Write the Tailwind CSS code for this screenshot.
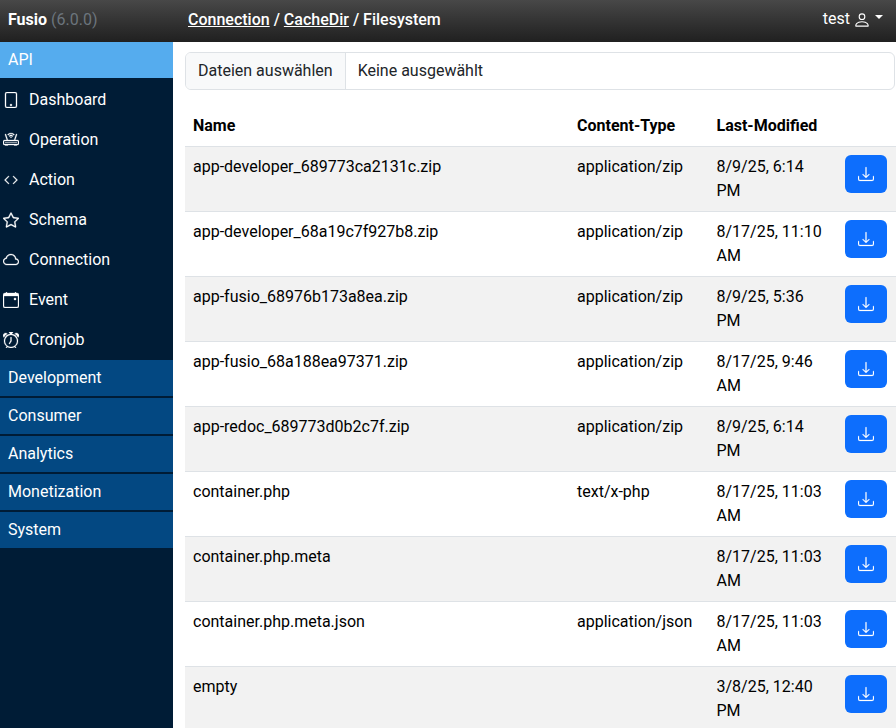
<!DOCTYPE html>
<html lang="en">
<head>
    <meta charset="UTF-8">
    <meta name="viewport" content="width=device-width, initial-scale=1.0">
    <title>Fusio - Filesystem</title>
    <script src="https://cdn.jsdelivr.net/npm/@tailwindcss/browser@4"></script>
</head>
<body class="h-[728px] overflow-hidden bg-white font-['Roboto',sans-serif] text-base text-black">
    <header class="flex h-[42px] items-center bg-gradient-to-b from-[#484848] to-[#202020] pb-[2px] text-white">
        <div class="w-[188px] pl-2 font-bold">Fusio <span class="font-normal text-[#6c757d]">(6.0.0)</span></div>
        <div class="flex-1 font-medium"><a href="#" class="underline">Connection</a> / <a href="#" class="underline">CacheDir</a> / Filesystem</div>
        <div class="flex items-center pb-[2px] pr-[13px]">
            test
            <svg class="ml-[3px] mt-[2px]" width="18" height="18" viewBox="0 0 16 16" fill="currentColor"><path d="M8 8a3 3 0 1 0 0-6 3 3 0 0 0 0 6m2-3a2 2 0 1 1-4 0 2 2 0 0 1 4 0m4 8c0 1-1 1-1 1H3s-1 0-1-1 1-4 6-4 6 3 6 4m-1-.004c-.001-.246-.154-.986-.832-1.664C11.516 10.68 10.289 10 8 10s-3.516.68-4.168 1.332c-.678.678-.83 1.418-.832 1.664z"/></svg>
            <span class="mb-[4px] ml-[4px] h-0 w-0 border-x-[4.5px] border-t-[4.5px] border-x-transparent border-t-white"></span>
        </div>
    </header>
    <div class="flex h-[686px]">
        <nav class="w-[173px] shrink-0 bg-[#001c36] text-white">
            <div class="flex h-9 items-center bg-[#55acee] pl-2">API</div>
            <ul class="pt-[2px]">
                <li class="flex h-10 items-center gap-[10px] pl-[3px]"><svg width="16" height="16" viewBox="0 0 16 16" fill="currentColor" stroke="currentColor" stroke-width="0.3"><path d="M12 1a1 1 0 0 1 1 1v12a1 1 0 0 1-1 1H4a1 1 0 0 1-1-1V2a1 1 0 0 1 1-1zM4 0a2 2 0 0 0-2 2v12a2 2 0 0 0 2 2h8a2 2 0 0 0 2-2V2a2 2 0 0 0-2-2z"/><path d="M8 14a1 1 0 1 0 0-2 1 1 0 0 0 0 2"/></svg>Dashboard</li>
                <li class="flex h-10 items-center gap-[10px] pl-[3px]"><svg width="16" height="16" viewBox="0 0 16 16" fill="currentColor" stroke="currentColor" stroke-width="0.3"><path d="M5.525 3.025a3.5 3.5 0 0 1 4.95 0 .5.5 0 1 0 .707-.707 4.5 4.5 0 0 0-6.364 0 .5.5 0 0 0 .707.707"/><path d="M6.94 4.44a1.5 1.5 0 0 1 2.12 0 .5.5 0 0 0 .708-.708 2.5 2.5 0 0 0-3.536 0 .5.5 0 0 0 .707.707Z"/><path d="M2.974 2.342a.5.5 0 1 0-.948.316L3.806 8H1.5A1.5 1.5 0 0 0 0 9.5v2A1.5 1.5 0 0 0 1.5 13H2a.5.5 0 0 0 .5.5h2A.5.5 0 0 0 5 13h6a.5.5 0 0 0 .5.5h2a.5.5 0 0 0 .5-.5h.5a1.5 1.5 0 0 0 1.5-1.5v-2A1.5 1.5 0 0 0 14.5 8h-2.306l1.78-5.342a.5.5 0 1 0-.948-.316L11.14 8H4.86zM14.5 9a.5.5 0 0 1 .5.5v2a.5.5 0 0 1-.5.5h-13a.5.5 0 0 1-.5-.5v-2a.5.5 0 0 1 .5-.5z"/><path d="M8.5 5.5a.5.5 0 1 1-1 0 .5.5 0 0 1 1 0M2.5 10.5a.5.5 0 1 1 1 0 .5.5 0 0 1-1 0m2 0a.5.5 0 1 1 1 0 .5.5 0 0 1-1 0m2 0a.5.5 0 1 1 1 0 .5.5 0 0 1-1 0m2 0a.5.5 0 1 1 1 0 .5.5 0 0 1-1 0m2 0a.5.5 0 1 1 1 0 .5.5 0 0 1-1 0m2 0a.5.5 0 1 1 1 0 .5.5 0 0 1-1 0"/></svg>Operation</li>
                <li class="flex h-10 items-center gap-[10px] pl-[3px]"><svg width="16" height="16" viewBox="0 0 16 16" fill="currentColor" stroke="currentColor" stroke-width="0.3"><path d="M5.854 4.854a.5.5 0 1 0-.708-.708l-3.5 3.5a.5.5 0 0 0 0 .708l3.5 3.5a.5.5 0 0 0 .708-.708L2.707 8zm4.292 0a.5.5 0 0 1 .708-.708l3.5 3.5a.5.5 0 0 1 0 .708l-3.5 3.5a.5.5 0 0 1-.708-.708L13.293 8z"/></svg>Action</li>
                <li class="flex h-10 items-center gap-[10px] pl-[3px]"><svg width="16" height="16" viewBox="0 0 16 16" fill="currentColor" stroke="currentColor" stroke-width="0.3"><path d="M2.866 14.85c-.078.444.36.791.746.593l4.39-2.256 4.389 2.256c.386.198.824-.149.746-.592l-.83-4.73 3.522-3.356c.33-.314.16-.888-.282-.95l-4.898-.696L8.465.792a.513.513 0 0 0-.927 0L5.354 5.12l-4.898.696c-.441.062-.612.636-.283.95l3.523 3.356-.83 4.73zm4.905-2.767-3.686 1.894.694-3.957a.56.56 0 0 0-.163-.505L1.71 6.745l4.052-.576a.53.53 0 0 0 .393-.288L8 2.223l1.847 3.658a.53.53 0 0 0 .393.288l4.052.575-2.906 2.77a.56.56 0 0 0-.163.506l.694 3.957-3.686-1.894a.5.5 0 0 0-.461 0z"/></svg>Schema</li>
                <li class="flex h-10 items-center gap-[10px] pl-[3px]"><svg width="16" height="16" viewBox="0 0 16 16" fill="currentColor" stroke="currentColor" stroke-width="0.3"><path d="M4.406 3.342A5.53 5.53 0 0 1 8 2c2.69 0 4.923 2 5.166 4.579C14.758 6.804 16 8.137 16 9.773 16 11.569 14.502 13 12.687 13H3.781C1.708 13 0 11.366 0 9.318c0-1.763 1.266-3.223 2.942-3.593.143-.863.698-1.723 1.464-2.383m.653.757c-.757.653-1.153 1.44-1.153 2.056v.448l-.445.049C2.064 6.805 1 7.952 1 9.318 1 10.785 2.23 12 3.781 12h8.906C13.98 12 15 10.988 15 9.773c0-1.216-1.02-2.228-2.313-2.228h-.5v-.5C12.188 4.825 10.328 3 8 3a4.53 4.53 0 0 0-2.941 1.1z"/></svg>Connection</li>
                <li class="flex h-10 items-center gap-[10px] pl-[3px]"><svg width="16" height="16" viewBox="0 0 16 16" fill="currentColor" stroke="currentColor" stroke-width="0.3"><path d="M11 6.5a.5.5 0 0 1 .5-.5h1a.5.5 0 0 1 .5.5v1a.5.5 0 0 1-.5.5h-1a.5.5 0 0 1-.5-.5z"/><path d="M3.5 0a.5.5 0 0 1 .5.5V1h8V.5a.5.5 0 0 1 1 0V1h1a2 2 0 0 1 2 2v11a2 2 0 0 1-2 2H2a2 2 0 0 1-2-2V3a2 2 0 0 1 2-2h1V.5a.5.5 0 0 1 .5-.5M1 4v10a1 1 0 0 0 1 1h12a1 1 0 0 0 1-1V4z"/></svg>Event</li>
                <li class="flex h-10 items-center gap-[10px] pl-[3px]"><svg width="16" height="16" viewBox="0 0 16 16" fill="currentColor" stroke="currentColor" stroke-width="0.3"><path d="M8.5 5.5a.5.5 0 0 0-1 0v3.362l-1.429 2.38a.5.5 0 1 0 .858.515l1.5-2.5A.5.5 0 0 0 8.5 9z"/><path d="M6.5 0a.5.5 0 0 0 0 1H7v1.07a7.001 7.001 0 0 0-3.273 12.474l-.602.602a.5.5 0 0 0 .707.708l.746-.746A6.97 6.97 0 0 0 8 16a6.97 6.97 0 0 0 3.422-.892l.746.746a.5.5 0 0 0 .707-.708l-.601-.602A7.001 7.001 0 0 0 9 2.07V1h.5a.5.5 0 0 0 0-1zm1.038 3.018a6 6 0 0 1 .924 0 6 6 0 1 1-.924 0M0 3.5c0 .753.333 1.429.86 1.887A8.04 8.04 0 0 1 4.387 1.86 2.5 2.5 0 0 0 0 3.5M13.5 1c-.753 0-1.429.333-1.887.86a8.04 8.04 0 0 1 3.527 3.527A2.5 2.5 0 0 0 13.5 1"/></svg>Cronjob</li>
            </ul>
            <div class="flex h-[36px] items-center bg-[#034882] pl-2">Development</div>
            <div class="mt-[2px] flex h-[36px] items-center bg-[#034882] pl-2">Consumer</div>
            <div class="mt-[2px] flex h-[36px] items-center bg-[#034882] pl-2">Analytics</div>
            <div class="mt-[2px] flex h-[36px] items-center bg-[#034882] pl-2">Monetization</div>
            <div class="mt-[2px] flex h-[36px] items-center bg-[#034882] pl-2">System</div>
        </nav>
        <main class="min-w-0 flex-1 overflow-hidden pl-3 pt-[10px]">
            <div class="flex h-[38px] w-[710px] overflow-hidden rounded-md border border-[#dee2e6] text-[#212529]">
                <div class="flex items-center border-r border-[#dee2e6] bg-[#f8f9fa] px-3">Dateien auswählen</div>
                <div class="flex items-center px-3">Keine ausgewählt</div>
            </div>
            <table class="mt-4 w-[711px] table-fixed border-collapse text-left">
                <colgroup>
                    <col class="w-[384px]"><col class="w-[139.5px]"><col class="w-[128.5px]"><col class="w-[59px]">
                </colgroup>
                <thead>
                    <tr class="h-10 border-b border-[#dee2e6]">
                        <th class="px-2 pt-px align-middle font-bold">Name</th>
                        <th class="px-2 pt-px align-middle font-bold">Content-Type</th>
                        <th class="px-2 pt-px align-middle font-bold">Last-Modified</th>
                        <th></th>
                    </tr>
                </thead>
                <tbody>
                    <tr class="border-b border-[#dee2e6] bg-[#f2f2f2]">
                        <td class="p-2 align-top">app-developer_689773ca2131c.zip</td>
                        <td class="p-2 align-top">application/zip</td>
                        <td class="p-2 align-top">8/9/25, 6:14 PM</td>
                        <td class="p-2 align-top"><button class="flex h-[38px] w-[42px] items-center justify-center rounded-md bg-[#0d6efd] text-white"><svg width="16" height="16" viewBox="0 0 16 16" fill="currentColor" stroke="currentColor" stroke-width="0.25"><path d="M.5 9.9a.5.5 0 0 1 .5.5v2.5a1 1 0 0 0 1 1h12a1 1 0 0 0 1-1v-2.5a.5.5 0 0 1 1 0v2.5a2 2 0 0 1-2 2H2a2 2 0 0 1-2-2v-2.5a.5.5 0 0 1 .5-.5"/><path d="M7.646 11.854a.5.5 0 0 0 .708 0l3-3a.5.5 0 0 0-.708-.708L8.5 10.293V1.5a.5.5 0 0 0-1 0v8.793L5.354 8.146a.5.5 0 1 0-.708.708z"/></svg></button></td>
                    </tr>
                    <tr class="border-b border-[#dee2e6]">
                        <td class="p-2 align-top">app-developer_68a19c7f927b8.zip</td>
                        <td class="p-2 align-top">application/zip</td>
                        <td class="p-2 align-top">8/17/25, 11:10 AM</td>
                        <td class="p-2 align-top"><button class="flex h-[38px] w-[42px] items-center justify-center rounded-md bg-[#0d6efd] text-white"><svg width="16" height="16" viewBox="0 0 16 16" fill="currentColor" stroke="currentColor" stroke-width="0.25"><path d="M.5 9.9a.5.5 0 0 1 .5.5v2.5a1 1 0 0 0 1 1h12a1 1 0 0 0 1-1v-2.5a.5.5 0 0 1 1 0v2.5a2 2 0 0 1-2 2H2a2 2 0 0 1-2-2v-2.5a.5.5 0 0 1 .5-.5"/><path d="M7.646 11.854a.5.5 0 0 0 .708 0l3-3a.5.5 0 0 0-.708-.708L8.5 10.293V1.5a.5.5 0 0 0-1 0v8.793L5.354 8.146a.5.5 0 1 0-.708.708z"/></svg></button></td>
                    </tr>
                    <tr class="border-b border-[#dee2e6] bg-[#f2f2f2]">
                        <td class="p-2 align-top">app-fusio_68976b173a8ea.zip</td>
                        <td class="p-2 align-top">application/zip</td>
                        <td class="p-2 align-top">8/9/25, 5:36 PM</td>
                        <td class="p-2 align-top"><button class="flex h-[38px] w-[42px] items-center justify-center rounded-md bg-[#0d6efd] text-white"><svg width="16" height="16" viewBox="0 0 16 16" fill="currentColor" stroke="currentColor" stroke-width="0.25"><path d="M.5 9.9a.5.5 0 0 1 .5.5v2.5a1 1 0 0 0 1 1h12a1 1 0 0 0 1-1v-2.5a.5.5 0 0 1 1 0v2.5a2 2 0 0 1-2 2H2a2 2 0 0 1-2-2v-2.5a.5.5 0 0 1 .5-.5"/><path d="M7.646 11.854a.5.5 0 0 0 .708 0l3-3a.5.5 0 0 0-.708-.708L8.5 10.293V1.5a.5.5 0 0 0-1 0v8.793L5.354 8.146a.5.5 0 1 0-.708.708z"/></svg></button></td>
                    </tr>
                    <tr class="border-b border-[#dee2e6]">
                        <td class="p-2 align-top">app-fusio_68a188ea97371.zip</td>
                        <td class="p-2 align-top">application/zip</td>
                        <td class="p-2 align-top">8/17/25, 9:46 AM</td>
                        <td class="p-2 align-top"><button class="flex h-[38px] w-[42px] items-center justify-center rounded-md bg-[#0d6efd] text-white"><svg width="16" height="16" viewBox="0 0 16 16" fill="currentColor" stroke="currentColor" stroke-width="0.25"><path d="M.5 9.9a.5.5 0 0 1 .5.5v2.5a1 1 0 0 0 1 1h12a1 1 0 0 0 1-1v-2.5a.5.5 0 0 1 1 0v2.5a2 2 0 0 1-2 2H2a2 2 0 0 1-2-2v-2.5a.5.5 0 0 1 .5-.5"/><path d="M7.646 11.854a.5.5 0 0 0 .708 0l3-3a.5.5 0 0 0-.708-.708L8.5 10.293V1.5a.5.5 0 0 0-1 0v8.793L5.354 8.146a.5.5 0 1 0-.708.708z"/></svg></button></td>
                    </tr>
                    <tr class="border-b border-[#dee2e6] bg-[#f2f2f2]">
                        <td class="p-2 align-top">app-redoc_689773d0b2c7f.zip</td>
                        <td class="p-2 align-top">application/zip</td>
                        <td class="p-2 align-top">8/9/25, 6:14 PM</td>
                        <td class="p-2 align-top"><button class="flex h-[38px] w-[42px] items-center justify-center rounded-md bg-[#0d6efd] text-white"><svg width="16" height="16" viewBox="0 0 16 16" fill="currentColor" stroke="currentColor" stroke-width="0.25"><path d="M.5 9.9a.5.5 0 0 1 .5.5v2.5a1 1 0 0 0 1 1h12a1 1 0 0 0 1-1v-2.5a.5.5 0 0 1 1 0v2.5a2 2 0 0 1-2 2H2a2 2 0 0 1-2-2v-2.5a.5.5 0 0 1 .5-.5"/><path d="M7.646 11.854a.5.5 0 0 0 .708 0l3-3a.5.5 0 0 0-.708-.708L8.5 10.293V1.5a.5.5 0 0 0-1 0v8.793L5.354 8.146a.5.5 0 1 0-.708.708z"/></svg></button></td>
                    </tr>
                    <tr class="border-b border-[#dee2e6]">
                        <td class="p-2 align-top">container.php</td>
                        <td class="p-2 align-top">text/x-php</td>
                        <td class="p-2 align-top">8/17/25, 11:03 AM</td>
                        <td class="p-2 align-top"><button class="flex h-[38px] w-[42px] items-center justify-center rounded-md bg-[#0d6efd] text-white"><svg width="16" height="16" viewBox="0 0 16 16" fill="currentColor" stroke="currentColor" stroke-width="0.25"><path d="M.5 9.9a.5.5 0 0 1 .5.5v2.5a1 1 0 0 0 1 1h12a1 1 0 0 0 1-1v-2.5a.5.5 0 0 1 1 0v2.5a2 2 0 0 1-2 2H2a2 2 0 0 1-2-2v-2.5a.5.5 0 0 1 .5-.5"/><path d="M7.646 11.854a.5.5 0 0 0 .708 0l3-3a.5.5 0 0 0-.708-.708L8.5 10.293V1.5a.5.5 0 0 0-1 0v8.793L5.354 8.146a.5.5 0 1 0-.708.708z"/></svg></button></td>
                    </tr>
                    <tr class="border-b border-[#dee2e6] bg-[#f2f2f2]">
                        <td class="p-2 align-top">container.php.meta</td>
                        <td class="p-2 align-top"></td>
                        <td class="p-2 align-top">8/17/25, 11:03 AM</td>
                        <td class="p-2 align-top"><button class="flex h-[38px] w-[42px] items-center justify-center rounded-md bg-[#0d6efd] text-white"><svg width="16" height="16" viewBox="0 0 16 16" fill="currentColor" stroke="currentColor" stroke-width="0.25"><path d="M.5 9.9a.5.5 0 0 1 .5.5v2.5a1 1 0 0 0 1 1h12a1 1 0 0 0 1-1v-2.5a.5.5 0 0 1 1 0v2.5a2 2 0 0 1-2 2H2a2 2 0 0 1-2-2v-2.5a.5.5 0 0 1 .5-.5"/><path d="M7.646 11.854a.5.5 0 0 0 .708 0l3-3a.5.5 0 0 0-.708-.708L8.5 10.293V1.5a.5.5 0 0 0-1 0v8.793L5.354 8.146a.5.5 0 1 0-.708.708z"/></svg></button></td>
                    </tr>
                    <tr class="border-b border-[#dee2e6]">
                        <td class="p-2 align-top">container.php.meta.json</td>
                        <td class="p-2 align-top">application/json</td>
                        <td class="p-2 align-top">8/17/25, 11:03 AM</td>
                        <td class="p-2 align-top"><button class="flex h-[38px] w-[42px] items-center justify-center rounded-md bg-[#0d6efd] text-white"><svg width="16" height="16" viewBox="0 0 16 16" fill="currentColor" stroke="currentColor" stroke-width="0.25"><path d="M.5 9.9a.5.5 0 0 1 .5.5v2.5a1 1 0 0 0 1 1h12a1 1 0 0 0 1-1v-2.5a.5.5 0 0 1 1 0v2.5a2 2 0 0 1-2 2H2a2 2 0 0 1-2-2v-2.5a.5.5 0 0 1 .5-.5"/><path d="M7.646 11.854a.5.5 0 0 0 .708 0l3-3a.5.5 0 0 0-.708-.708L8.5 10.293V1.5a.5.5 0 0 0-1 0v8.793L5.354 8.146a.5.5 0 1 0-.708.708z"/></svg></button></td>
                    </tr>
                    <tr class="border-b border-[#dee2e6] bg-[#f2f2f2]">
                        <td class="p-2 align-top">empty</td>
                        <td class="p-2 align-top"></td>
                        <td class="p-2 align-top">3/8/25, 12:40 PM</td>
                        <td class="p-2 align-top"><button class="flex h-[38px] w-[42px] items-center justify-center rounded-md bg-[#0d6efd] text-white"><svg width="16" height="16" viewBox="0 0 16 16" fill="currentColor" stroke="currentColor" stroke-width="0.25"><path d="M.5 9.9a.5.5 0 0 1 .5.5v2.5a1 1 0 0 0 1 1h12a1 1 0 0 0 1-1v-2.5a.5.5 0 0 1 1 0v2.5a2 2 0 0 1-2 2H2a2 2 0 0 1-2-2v-2.5a.5.5 0 0 1 .5-.5"/><path d="M7.646 11.854a.5.5 0 0 0 .708 0l3-3a.5.5 0 0 0-.708-.708L8.5 10.293V1.5a.5.5 0 0 0-1 0v8.793L5.354 8.146a.5.5 0 1 0-.708.708z"/></svg></button></td>
                    </tr>
                </tbody>
            </table>
        </main>
    </div>
</body>
</html>
